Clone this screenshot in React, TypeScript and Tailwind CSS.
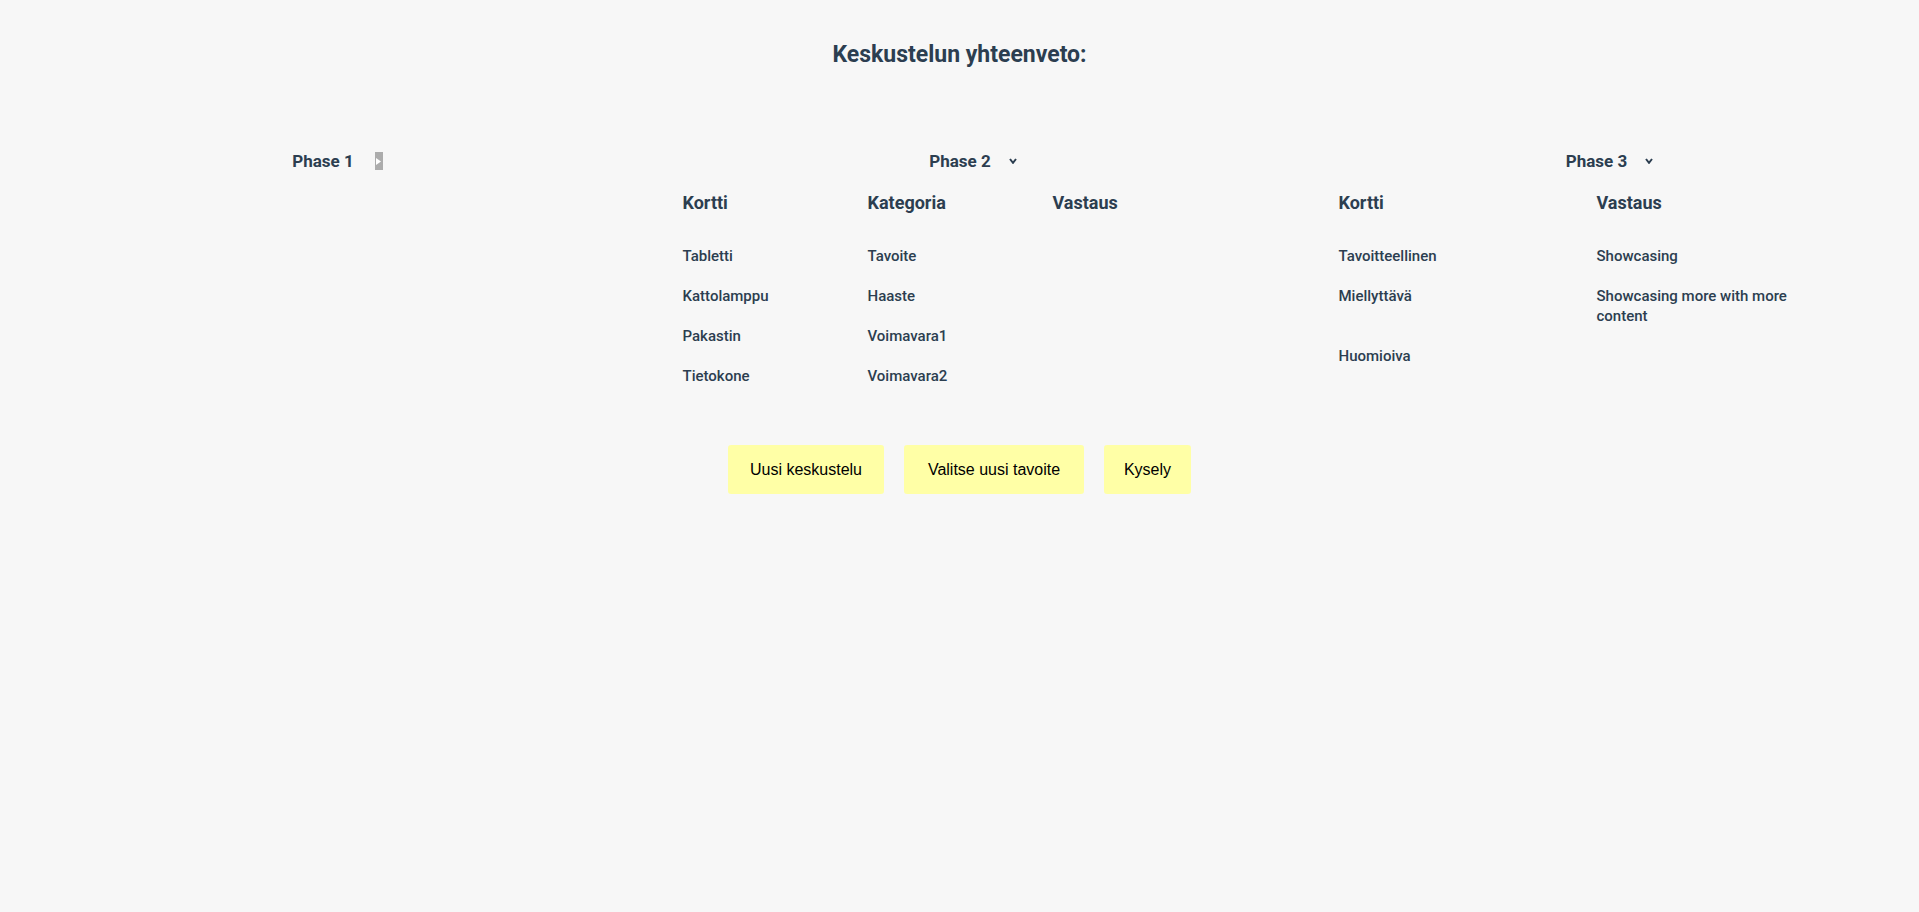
import { ReactNode } from "react";

type Row = string[];

function PhaseToggle({ open }: { open: boolean }) {
  if (!open) {
    return (
      <span className="absolute left-[calc(100%+21px)] top-1/2 flex h-[18px] w-[8px] -translate-y-1/2 items-center justify-center bg-[#acacac]">
        <svg width="5" height="7" viewBox="0 0 5 7">
          <path d="M0 0 L5 3.5 L0 7 Z" fill="#ffffff" />
        </svg>
      </span>
    );
  }
  return (
    <span className="absolute left-[calc(100%+18px)] top-1/2 flex -translate-y-1/2 items-center">
      <svg width="8" height="6" viewBox="0 0 8 6">
        <path d="M1 1 L4 4.8 L7 1" fill="none" stroke="#2c3e50" strokeWidth="2" />
      </svg>
    </span>
  );
}

function PhaseTitle({ title, open }: { title: string; open: boolean }) {
  return (
    <div className="mb-[16px] flex justify-center">
      <span className="relative text-[17px] font-bold leading-[24px]">
        {title}
        <PhaseToggle open={open} />
      </span>
    </div>
  );
}

function SummaryTable({
  headers,
  rows,
  colWidth,
}: {
  headers: string[];
  rows: Row[];
  colWidth: string;
}) {
  return (
    <div className={`mx-auto grid ${colWidth}`}>
      {headers.map((h) => (
        <div key={h} className="pb-[19px] pr-[30px] text-[18px] font-bold leading-[28px]">
          {h}
        </div>
      ))}
      {rows.map((row, i) =>
        row.map((cell, j) => (
          <div
            key={`${i}-${j}`}
            className="py-[10px] pr-[30px] text-[15px] font-medium leading-[20px]"
          >
            {cell}
          </div>
        ))
      )}
    </div>
  );
}

function Column({ children }: { children: ReactNode }) {
  return <div className="flex flex-col">{children}</div>;
}

export default function App() {
  const phase2: Row[] = [
    ["Tabletti", "Tavoite", ""],
    ["Kattolamppu", "Haaste", ""],
    ["Pakastin", "Voimavara1", ""],
    ["Tietokone", "Voimavara2", ""],
  ];

  const phase3: Row[] = [
    ["Tavoitteellinen", "Showcasing"],
    ["Miellyttävä", "Showcasing more with more content"],
    ["Huomioiva", ""],
  ];

  return (
    <div className="min-h-screen bg-[#f7f7f7] font-['Roboto',sans-serif] text-[#2c3e50]">
      <h1 className="pt-[40px] text-center text-[23px] font-bold leading-[30px]">
        Keskustelun yhteenveto:
      </h1>

      {/* Phases */}
      <div className="mt-[79px] grid grid-cols-[646px_628px_1fr]">
        <Column>
          <PhaseTitle title="Phase 1" open={false} />
        </Column>
        <Column>
          <PhaseTitle title="Phase 2" open={true} />
          <SummaryTable
            headers={["Kortti", "Kategoria", "Vastaus"]}
            rows={phase2}
            colWidth="w-[555px] grid-cols-[185px_185px_185px]"
          />
        </Column>
        <Column>
          <PhaseTitle title="Phase 3" open={true} />
          <SummaryTable
            headers={["Kortti", "Vastaus"]}
            rows={phase3}
            colWidth="w-[516px] grid-cols-[258px_258px]"
          />
        </Column>
      </div>

      {/* Actions */}
      <div className="mt-[49px] flex justify-center gap-[20px] font-['Liberation_Sans',Arial,sans-serif] text-[16px] text-black">
        <button className="flex h-[49px] w-[156px] items-center justify-center rounded-[3px] bg-[#ffffa6]">
          Uusi keskustelu
        </button>
        <button className="flex h-[49px] w-[180px] items-center justify-center rounded-[3px] bg-[#ffffa6]">
          Valitse uusi tavoite
        </button>
        <button className="flex h-[49px] w-[87px] items-center justify-center rounded-[3px] bg-[#ffffa6]">
          Kysely
        </button>
      </div>
    </div>
  );
}
